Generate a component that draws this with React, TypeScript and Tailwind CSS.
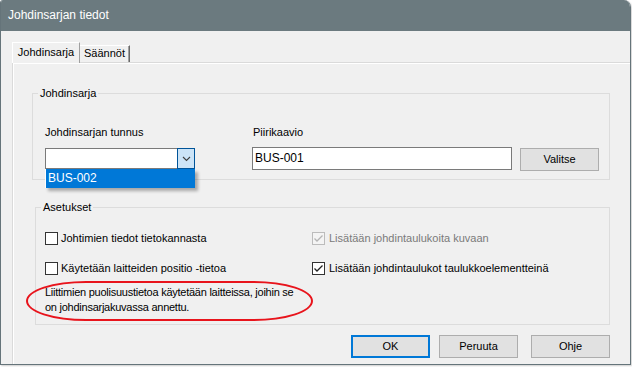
import React from 'react'

function Check({ checked, disabled }: { checked?: boolean; disabled?: boolean }) {
  return (
    <span
      className={
        'w-[13px] h-[13px] shrink-0 border flex items-center justify-center ' +
        (disabled ? 'border-[#bcbcbc] bg-[#f4f4f4]' : 'border-[#333333] bg-white')
      }
    >
      {checked && (
        <svg width="11" height="11" viewBox="0 0 11 11">
          <path
            d="M1.5 5.5 L4 8 L9.5 2.5"
            fill="none"
            stroke={disabled ? '#b4b4b4' : '#222222'}
            strokeWidth="1.3"
          />
        </svg>
      )}
    </span>
  )
}

function Btn({ label, primary, className = '' }: { label: string; primary?: boolean; className?: string }) {
  return (
    <div
      className={
        'w-[79px] h-[23px] bg-[#e1e1e1] flex items-center justify-center ' +
        (primary ? 'border-2 border-[#0078d7] ' : 'border border-[#adadad] ') +
        className
      }
    >
      {label}
    </div>
  )
}

export default function App() {
  return (
    <div className="w-[632px] h-[367px] bg-white font-['Liberation_Sans',Arial,sans-serif] text-[11px] leading-[13px] text-black">
      <div className="w-[631px] h-[365px] flex flex-col rounded-tr-[7px] rounded-tl-[3px] overflow-hidden border-x border-b border-[#65747a] shadow-[1px_1px_2px_rgba(0,0,0,0.2)]">
        {/* title bar */}
        <div className="h-[31px] shrink-0 bg-[#6b7a7f] flex items-center pl-[7px] pb-[1px] text-white text-[12px]">
          Johdinsarjan tiedot
        </div>

        <div className="flex-1 bg-[#f0f0f0] flex flex-col pt-[11px] pl-[10px]">
          {/* tabs */}
          <div className="flex items-end h-[20px] pl-[1px]">
            <div className="relative z-10 w-[68px] h-[21px] -mb-[1px] bg-[#f0f0f0] border-l border-t border-r border-l-white border-t-white border-r-[#a0a0a0] flex items-start justify-center pt-[3px]">
              Johdinsarja
            </div>
            <div className="w-[50px] h-[17px] border-t border-t-white border-r border-r-[#696969] shadow-[inset_-1px_0_0_#a0a0a0] flex items-start justify-center pt-[1px]">
              Säännöt
            </div>
          </div>

          {/* tab panel */}
          <div className="flex-1 ml-[1px] border-t border-l border-[#dadada] shadow-[inset_1px_1px_0_#ffffff] pl-[19px] flex flex-col">
            {/* group Johdinsarja */}
            <fieldset className="mt-[24px] w-[578px] border border-[#dcdcdc]">
              <legend className="ml-[5px] px-[2px] leading-[13px]">Johdinsarja</legend>
              <div className="flex pl-[12px] pt-[26px] pb-[8px]">
                <div className="w-[150px] flex flex-col">
                  <div className="mb-[8px]">Johdinsarjan tunnus</div>
                  <div className="relative w-[150px] h-[21px] mt-[1px] bg-white border border-[#7a7a7a] flex justify-end">
                    <div className="w-[18px] h-[21px] -mt-[1px] -mr-[1px] bg-[#cce4f7] border border-[#005499] flex items-center justify-center">
                      <svg width="9" height="6" viewBox="0 0 9 6">
                        <path d="M1 1 L4.5 4.5 L8 1" fill="none" stroke="#404040" strokeWidth="1.1" />
                      </svg>
                    </div>
                    {/* open drop-down list */}
                    <div className="absolute left-[-1px] top-[20px] w-[150px] h-[19px] bg-[#0078d7] border-l border-l-white text-white text-[12px] flex items-center pl-[2px] shadow-[3px_3px_3px_rgba(0,0,0,0.3)]">
                      BUS-002
                    </div>
                  </div>
                </div>
                <div className="ml-[57px] flex flex-col">
                  <div className="pl-[1px] mb-[8px]">Piirikaavio</div>
                  <div className="flex items-start">
                    <div className="w-[260px] h-[23px] bg-white border border-[#7a7a7a] flex items-center pl-[2px] text-[12px]">
                      BUS-001
                    </div>
                    <Btn label="Valitse" className="ml-[8px] mt-[1px] h-[21px]" />
                  </div>
                </div>
              </div>
            </fieldset>

            {/* group Asetukset */}
            <fieldset className="mt-[21px] ml-[3px] w-[575px] border border-[#dcdcdc]">
              <legend className="ml-[5px] px-[2px] leading-[13px]">Asetukset</legend>
              <div className="pl-[9px] pt-[17px] pb-[9px]">
                <div className="flex">
                  <div className="w-[267px] flex flex-col gap-[15px]">
                    <div className="flex items-center h-[15px] gap-[3px]">
                      <Check />
                      <span>Johtimien tiedot tietokannasta</span>
                    </div>
                    <div className="flex items-center h-[15px] gap-[3px]">
                      <Check />
                      <span>Käytetään laitteiden positio -tietoa</span>
                    </div>
                  </div>
                  <div className="flex flex-col gap-[15px]">
                    <div className="flex items-center h-[15px] gap-[4px] text-[#7a7a7a]">
                      <Check checked disabled />
                      <span>Lisätään johdintaulukoita kuvaan</span>
                    </div>
                    <div className="flex items-center h-[15px] gap-[4px]">
                      <Check checked />
                      <span>Lisätään johdintaulukot taulukkoelementteinä</span>
                    </div>
                  </div>
                </div>
                <div className="relative mt-[9px] leading-[15px] whitespace-nowrap tracking-[-0.25px]">
                  <div className="absolute left-[-19px] top-[-4px] w-[287px] h-[40px] rounded-[60px/20px] border-2 border-[#e8141c]" />
                  Liittimien puolisuustietoa käytetään laitteissa, joihin se
                  <br />
                  on johdinsarjakuvassa annettu.
                </div>
              </div>
            </fieldset>

            {/* buttons */}
            <div className="w-[578px] mt-[10px] flex justify-end">
              <Btn label="OK" primary />
              <Btn label="Peruuta" className="ml-[9px]" />
              <Btn label="Ohje" className="ml-[13px]" />
            </div>
          </div>
        </div>
      </div>
    </div>
  )
}
